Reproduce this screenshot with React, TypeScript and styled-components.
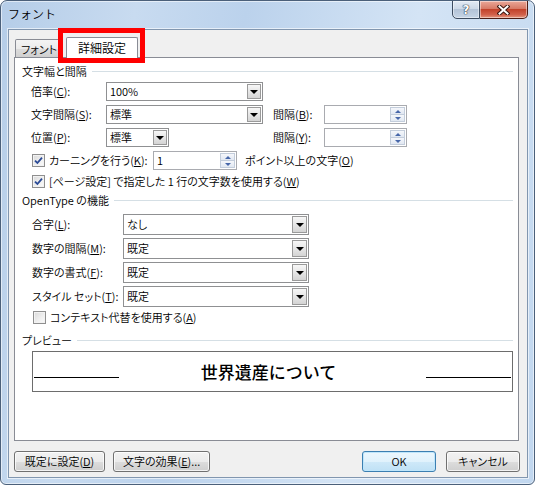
import React from "react";
import styled, { createGlobalStyle, css } from "styled-components";

const GlobalStyle = createGlobalStyle`
  * {
    box-sizing: border-box;
  }
  html,
  body {
    margin: 0;
    padding: 0;
    background: #ffffff;
  }
  body {
    font-family: "Noto Sans CJK JP", "Noto Sans", sans-serif;
    font-size: 11px;
    font-weight: 350;
    color: #000;
    font-feature-settings: "palt";
  }
`;

const Window = styled.div`
  position: relative;
  width: 535px;
  height: 485px;
  display: flex;
  flex-direction: column;
  border: 1px solid #4b607a;
  border-radius: 7px 7px 6px 6px;
  background: linear-gradient(
    100deg,
    #b5cde8 0%,
    #c8dbf0 22%,
    #bbd2ec 40%,
    #d4e4f5 68%,
    #c1d7ef 100%
  );
  box-shadow: inset 0 0 0 1px rgba(255, 255, 255, 0.55);
  overflow: hidden;
`;

const TitleBar = styled.div`
  height: 28px;
  flex: none;
  display: flex;
  align-items: flex-start;
  justify-content: space-between;
  padding: 0 6px 0 7px;
`;

const Title = styled.div`
  font-size: 12px;
  line-height: 26px;
  font-feature-settings: normal;
`;

const CaptionButtons = styled.div`
  display: flex;
`;

const CaptionButton = styled.div<{ $close?: boolean }>`
  width: ${(p) => (p.$close ? 48 : 28)}px;
  height: 19px;
  margin-top: -1px;
  display: flex;
  align-items: center;
  justify-content: center;
  border: 1px solid #3d4c60;
  border-radius: ${(p) => (p.$close ? "0 0 5px 0" : "0 0 0 5px")};
  background: linear-gradient(#e2eaf4 0%, #cdd9e7 45%, #b3c3d7 50%, #c6d5e6 100%);
  box-shadow: inset 0 0 0 1px rgba(255, 255, 255, 0.45);
  ${(p) =>
    p.$close &&
    css`
      border-color: #4c1c14;
      border-left: none;
      background: linear-gradient(#eaa899 0%, #d77a66 45%, #c2432b 50%, #d1604a 80%, #e4977e 100%);
    `}
`;

const HelpGlyph = styled.span`
  font-family: "DejaVu Sans", sans-serif;
  font-weight: bold;
  font-size: 12px;
  line-height: 1;
  color: #ffffff;
  text-shadow: 0 0 1px #2a3442, 0 0 1px #2a3442, 0 0 1px #2a3442;
`;

const Highlight = styled.div`
  position: absolute;
  left: 57px;
  top: 27px;
  width: 87px;
  height: 35px;
  border: 5px solid #ff0000;
  pointer-events: none;
  z-index: 5;
`;

const Client = styled.div`
  flex: 1;
  margin: 0 6px 6px 7px;
  display: flex;
  flex-direction: column;
  background: #f0f0f0;
  border: 1px solid #8196af;
  box-shadow: 0 0 0 1px rgba(255, 255, 255, 0.6);
`;

const TabStrip = styled.div`
  height: 27px;
  flex: none;
  display: flex;
  align-items: flex-end;
  padding-left: 6px;
`;

const Tab = styled.div<{ $active?: boolean }>`
  display: flex;
  align-items: center;
  justify-content: center;
  border: 1px solid #898c95;
  border-bottom: none;
  border-radius: 2px 2px 0 0;
  ${(p) =>
    p.$active
      ? css`
          position: relative;
          z-index: 1;
          width: 72px;
          height: 21px;
          margin-left: 3px;
          margin-bottom: -1px;
          padding-bottom: 1px;
          font-size: 12px;
          background: #ffffff;
        `
      : css`
          width: 48px;
          height: 18px;
          background: linear-gradient(#f4f4f4 0%, #ebebeb 50%, #dddddd 51%, #cfcfcf 100%);
        `}
`;

const Panel = styled.div`
  height: 384px;
  flex: none;
  margin: 0 8px 0 5px;
  padding: 6px 5px 0 7px;
  display: flex;
  flex-direction: column;
  background: #ffffff;
  border: 1px solid #898c95;
`;

const GroupHeader = styled.div<{ $mt: number }>`
  display: flex;
  align-items: center;
  height: 14px;
  margin-top: ${(p) => p.$mt}px;
  line-height: 14px;
  &::after {
    content: "";
    flex: 1;
    height: 1px;
    margin-left: 5px;
    background: #d5dfe5;
  }
`;

const Rows = styled.div<{ $indent: number }>`
  display: flex;
  flex-direction: column;
  padding-left: ${(p) => p.$indent}px;
`;

const GridRow = styled.div<{ $cols: string; $h: number; $mt: number }>`
  display: grid;
  grid-template-columns: ${(p) => p.$cols};
  align-items: center;
  height: ${(p) => p.$h}px;
  margin-top: ${(p) => p.$mt}px;
`;

const FlexRow = styled.div<{ $h: number; $mt: number }>`
  display: flex;
  align-items: center;
  height: ${(p) => p.$h}px;
  margin-top: ${(p) => p.$mt}px;
`;

const Label = styled.span<{ $w?: number; $ml?: number }>`
  white-space: nowrap;
  line-height: 1;
  ${(p) => p.$w !== undefined && `width: ${p.$w}px;`}
  ${(p) => p.$ml !== undefined && `margin-left: ${p.$ml}px;`}
`;

const Key = styled.span`
  text-decoration: underline;
  text-underline-offset: 1px;
`;

const Select = styled.div<{ $w: number }>`
  width: ${(p) => p.$w}px;
  height: 100%;
  display: flex;
  border: 1px solid #8f9092;
  background: #ffffff;
`;

const SelectValue = styled.span`
  flex: 1;
  display: flex;
  align-items: center;
  padding-left: 3px;
  line-height: 1;
`;

const DropButton = styled.span<{ $w: number }>`
  width: ${(p) => p.$w}px;
  margin: 1px;
  display: flex;
  align-items: center;
  justify-content: center;
  border: 1px solid #9a9a9a;
  background: linear-gradient(#f7f7f7 0%, #e6e6e6 50%, #d4d4d4 100%);
  &::after {
    content: "";
    margin-top: 1px;
    border-left: 4px solid transparent;
    border-right: 4px solid transparent;
    border-top: 4px solid #000000;
  }
`;

const Spin = styled.div<{ $w: number }>`
  width: ${(p) => p.$w}px;
  height: 100%;
  display: flex;
  border: 1px solid #a9abb0;
  background: #ffffff;
`;

const SpinButtons = styled.span`
  width: 15px;
  margin: 1px;
  display: flex;
  flex-direction: column;
  border: 1px solid #c3cddb;
`;

const SpinHalf = styled.span<{ $up?: boolean }>`
  flex: 1;
  display: flex;
  align-items: center;
  justify-content: center;
  background: linear-gradient(#f5f7fb 0%, #e1e8f2 100%);
  ${(p) => p.$up && "border-bottom: 1px solid #c3cddb;"}
  &::after {
    content: "";
    border-left: 3px solid transparent;
    border-right: 3px solid transparent;
    ${(p) => (p.$up ? "border-bottom" : "border-top")}: 3px solid #4767a9;
  }
`;

const Check = styled.span`
  width: 13px;
  height: 13px;
  flex: none;
  margin: 0 4px 0 1px;
  display: flex;
  align-items: center;
  justify-content: center;
  border: 1px solid #8f8f8f;
  background: linear-gradient(135deg, #d9d9d9 0%, #f0f0f0 60%, #fbfbfb 100%);
  box-shadow: inset 0 0 0 1px #f2f2f2;
`;

const PreviewBox = styled.div`
  height: 41px;
  margin: 4px 0 0 10px;
  padding: 0 1px;
  display: grid;
  grid-template-columns: 85px 1fr 85px;
  border: 1px solid #6d6d6d;
`;

const Rule = styled.span`
  align-self: end;
  height: 1px;
  margin-bottom: 13px;
  background: #000000;
`;

const PreviewText = styled.span`
  align-self: center;
  justify-self: center;
  font-size: 17px;
  font-weight: 450;
  font-feature-settings: normal;
  line-height: 1;
  margin-right: 8px;
`;

const ButtonBar = styled.div`
  height: 21px;
  flex: none;
  margin-top: 10px;
  padding: 0 7px 0 5px;
  display: flex;
  justify-content: space-between;
`;

const ButtonGroup = styled.div<{ $gap: number }>`
  display: flex;
  gap: ${(p) => p.$gap}px;
`;

const Button = styled.button<{ $w: number; $default?: boolean }>`
  width: ${(p) => p.$w}px;
  height: 21px;
  padding: 0;
  font-family: inherit;
  font-size: 11px;
  font-weight: 350;
  font-feature-settings: "palt";
  line-height: 1;
  color: #000;
  border: 1px solid #707070;
  border-radius: 3px;
  background: linear-gradient(#f2f2f2 0%, #ebebeb 50%, #dddddd 51%, #cfcfcf 100%);
  box-shadow: inset 0 0 0 1px rgba(255, 255, 255, 0.75);
  ${(p) =>
    p.$default &&
    css`
      border-color: #3c7fb1;
      background: linear-gradient(#ecf7fd 0%, #e0f2fc 50%, #cfe9f9 51%, #bfe1f5 100%);
      box-shadow: inset 0 0 0 1px #bfe6fb;
    `}
`;

const CheckMark = () => (
  <svg width="9" height="9" viewBox="0 0 9 9">
    <path d="M1 4.6 L3.4 7 L8 1.6" fill="none" stroke="#2a4a96" strokeWidth="1.8" />
  </svg>
);

const CloseX = () => (
  <svg width="13" height="10" viewBox="0 0 13 10">
    <path d="M2.5 1.5 L10.5 8.5 M10.5 1.5 L2.5 8.5" stroke="#3a1710" strokeWidth="4" strokeLinecap="square" />
    <path d="M2.5 1.5 L10.5 8.5 M10.5 1.5 L2.5 8.5" stroke="#ffffff" strokeWidth="2" strokeLinecap="square" />
  </svg>
);

const TOP_COLS = "75px 167px 51px 84px";
const OT_COLS = "91px 186px";

const otRows: { label: string; key: string; value: string; mt: number }[] = [
  { label: "合字", key: "L", value: "なし", mt: 7 },
  { label: "数字の間隔", key: "M", value: "既定", mt: 3 },
  { label: "数字の書式", key: "F", value: "既定", mt: 3 },
  { label: "スタイル セット", key: "T", value: "既定", mt: 3 },
];

export default function App() {
  return (
    <>
      <GlobalStyle />
      <Window>
        <TitleBar>
          <Title>フォント</Title>
          <CaptionButtons>
            <CaptionButton>
              <HelpGlyph>?</HelpGlyph>
            </CaptionButton>
            <CaptionButton $close>
              <CloseX />
            </CaptionButton>
          </CaptionButtons>
        </TitleBar>
        <Highlight />
        <Client>
          <TabStrip>
            <Tab>フォント</Tab>
            <Tab $active>詳細設定</Tab>
          </TabStrip>
          <Panel>
            <GroupHeader $mt={0}>文字幅と間隔</GroupHeader>
            <Rows $indent={9}>
              <GridRow $cols={TOP_COLS} $h={19} $mt={4}>
                <Label>
                  倍率(<Key>C</Key>):
                </Label>
                <Select $w={157}>
                  <SelectValue>100%</SelectValue>
                  <DropButton $w={14} />
                </Select>
              </GridRow>
              <GridRow $cols={TOP_COLS} $h={19} $mt={4}>
                <Label>
                  文字間隔(<Key>S</Key>):
                </Label>
                <Select $w={157}>
                  <SelectValue>標準</SelectValue>
                  <DropButton $w={14} />
                </Select>
                <Label>
                  間隔(<Key>B</Key>):
                </Label>
                <Spin $w={83}>
                  <SelectValue />
                  <SpinButtons>
                    <SpinHalf $up />
                    <SpinHalf />
                  </SpinButtons>
                </Spin>
              </GridRow>
              <GridRow $cols={TOP_COLS} $h={19} $mt={4}>
                <Label>
                  位置(<Key>P</Key>):
                </Label>
                <Select $w={63}>
                  <SelectValue>標準</SelectValue>
                  <DropButton $w={14} />
                </Select>
                <Label>
                  間隔(<Key>Y</Key>):
                </Label>
                <Spin $w={83}>
                  <SelectValue />
                  <SpinButtons>
                    <SpinHalf $up />
                    <SpinHalf />
                  </SpinButtons>
                </Spin>
              </GridRow>
              <FlexRow $h={19} $mt={4}>
                <Check>
                  <CheckMark />
                </Check>
                <Label $w={104}>
                  カーニングを行う(<Key>K</Key>):
                </Label>
                <Spin $w={84}>
                  <SelectValue>1</SelectValue>
                  <SpinButtons>
                    <SpinHalf $up />
                    <SpinHalf />
                  </SpinButtons>
                </Spin>
                <Label $ml={8}>
                  ポイント以上の文字(<Key>O</Key>)
                </Label>
              </FlexRow>
              <FlexRow $h={18} $mt={2}>
                <Check>
                  <CheckMark />
                </Check>
                <Label>
                  [ページ設定] で指定した 1 行の文字数を使用する(<Key>W</Key>)
                </Label>
              </FlexRow>
            </Rows>

            <GroupHeader $mt={3}>OpenType の機能</GroupHeader>
            <Rows $indent={10}>
              {otRows.map((r) => (
                <GridRow key={r.key} $cols={OT_COLS} $h={21} $mt={r.mt}>
                  <Label>
                    {r.label}(<Key>{r.key}</Key>):
                  </Label>
                  <Select $w={186}>
                    <SelectValue>{r.value}</SelectValue>
                    <DropButton $w={15} />
                  </Select>
                </GridRow>
              ))}
              <FlexRow $h={17} $mt={2}>
                <Check />
                <Label>
                  コンテキスト代替を使用する(<Key>A</Key>)
                </Label>
              </FlexRow>
            </Rows>

            <GroupHeader $mt={7}>プレビュー</GroupHeader>
            <PreviewBox>
              <Rule />
              <PreviewText>世界遺産について</PreviewText>
              <Rule />
            </PreviewBox>
          </Panel>
          <ButtonBar>
            <ButtonGroup $gap={8}>
              <Button $w={91}>
                既定に設定(<Key>D</Key>)
              </Button>
              <Button $w={97}>
                文字の効果(<Key>E</Key>)...
              </Button>
            </ButtonGroup>
            <ButtonGroup $gap={10}>
              <Button $w={74} $default>
                OK
              </Button>
              <Button $w={74}>キャンセル</Button>
            </ButtonGroup>
          </ButtonBar>
        </Client>
      </Window>
    </>
  );
}
